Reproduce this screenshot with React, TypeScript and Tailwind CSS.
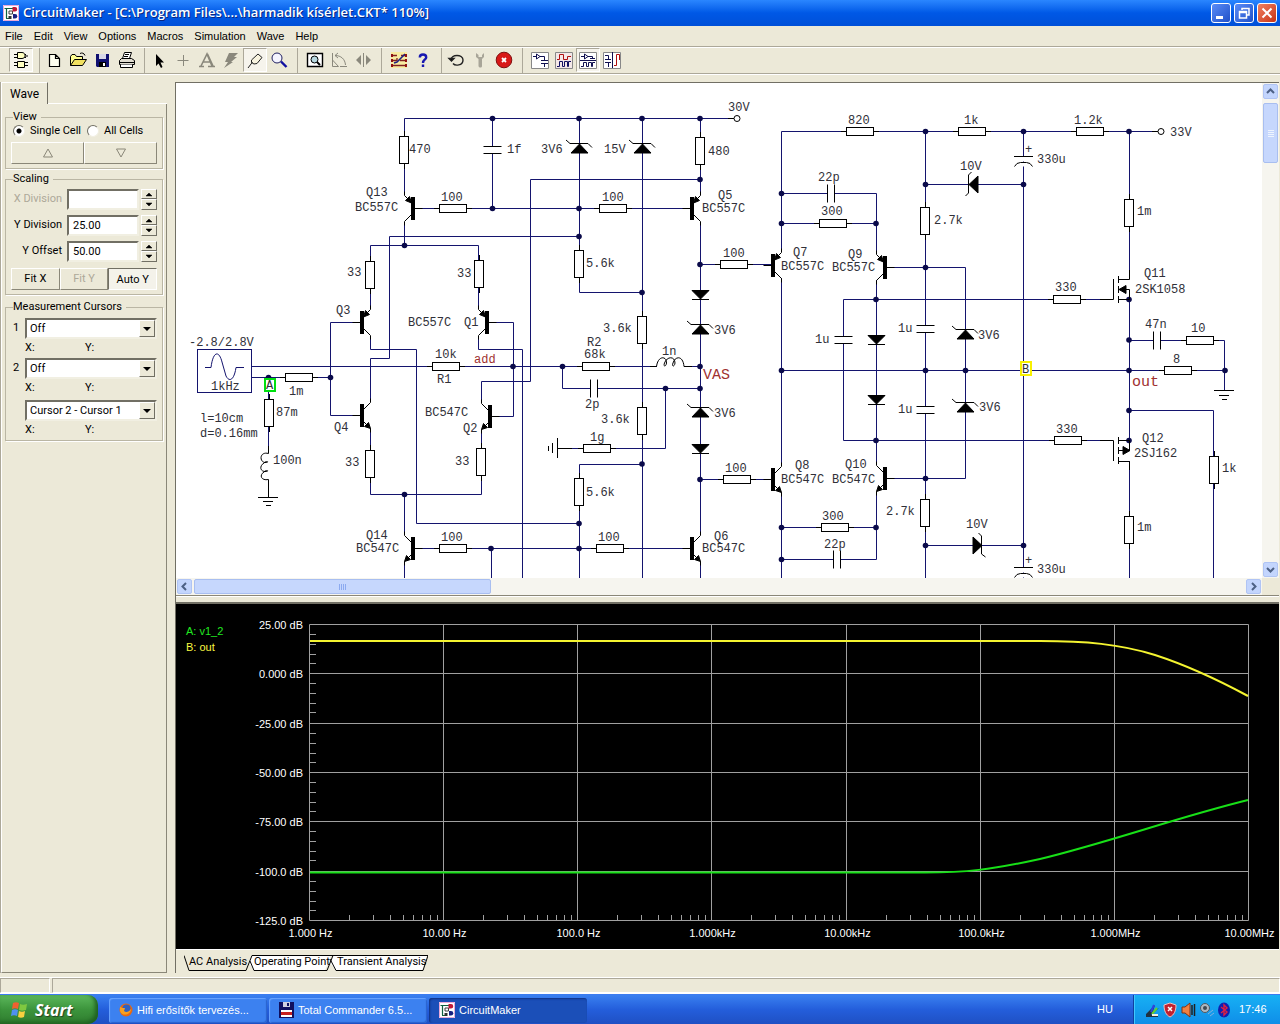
import type { ReactNode } from 'react';

const MENUS = ['File', 'Edit', 'View', 'Options', 'Macros', 'Simulation', 'Wave', 'Help'];

/* ---------- Schematic data ---------- */

const WIRES = [
  // left half
  'M404.5 137V118.5H733', 'M492.5 118V208', 'M579.5 118V250', 'M642.5 118V578', 'M700.5 118V195',
  'M404.5 163V195', 'M404.5 222V245.5', 'M415 208.5H690', 'M700.5 179.5H530.5V381.5H481.5V403',
  'M579.5 236.5H389.5V358.5H370.5V402', 'M370.5 309V245.5H478.5V309', 'M579.5 277V292.5H642.5',
  'M360 322.5H330.5V415.5H360', 'M370.5 336V349.5H416.5V523.5H579.5', 'M478.5 336V349.5H522.5V578',
  'M489 322.5H513.5V416.5H492', 'M252 366.5H657', 'M684 366.5H700', 'M252 377.5H330',
  'M370.5 429V494.5H481.5V430', 'M404.5 494.5V535', 'M404.5 562V578', 'M415 548.5H690', 'M491.5 548.5V578',
  'M562.5 366.5V388.5H700', 'M665.5 388.5V448.5H558', 'M642.5 464.5H579.5V578', 'M268.5 377V453',
  'M700.5 222V535', 'M700.5 562V578', 'M700 264.5H771', 'M700 479.5H771',
  // right half
  'M781.5 252V131.5H1157', 'M781.5 193.5H876.5V253', 'M781.5 223.5H876', 'M781.5 278V466', 'M781.5 493V578',
  'M925.5 131V578', 'M925.5 184.5H1023', 'M1023.5 131V578', 'M1129.5 131V279', 'M886 267.5H965.5V478.5H887',
  'M1113 299.5H843.5V440.5H1113', 'M876.5 280V465', 'M876.5 492V559.5H781.5', 'M781.5 527.5H876',
  'M781.5 370.5H1225', 'M925.5 545.5H1023', 'M1129.5 299V440', 'M1129.5 461V578',
  'M1129.5 340.5H1224.5V390', 'M1129.5 410.5H1213.5V578',
];

const DOTS: [number, number][] = [
  [492.5, 118.5], [579, 118.5], [642, 118.5], [700, 118.5], [700, 179.5], [492.5, 208.5], [579, 208.5],
  [579, 236.5], [404.5, 245.5], [642, 292.5], [700, 264.5], [268.5, 377.5], [330.5, 377.5], [513, 366.5],
  [562.5, 366.5], [700, 366.5], [665.5, 388.5], [700, 388.5], [642, 464], [404.5, 494.5], [579, 523.5],
  [491, 548.5], [579, 548.5], [700, 479.5], [781.5, 193.5], [781.5, 223.5], [876, 223.5], [781.5, 370.5],
  [925.5, 131.5], [1023.5, 131.5], [1129, 131.5], [925.5, 184.5], [1023.5, 184.5], [925.5, 267.5],
  [876, 299.5], [925.5, 370.5], [965.5, 370.5], [876, 440.5], [925.5, 478.5], [925.5, 545.5], [1023.5, 545.5],
  [781.5, 527.5], [876, 527.5], [781.5, 559.5], [1129, 299.5], [1129, 340], [1129, 370.5], [1225, 370.5],
  [1129, 410.5], [1129, 440.5],
];

const H_RESISTORS: [number, number][] = [
  [453, 208.5], [613, 208.5], [446, 366.5], [299, 377.5], [596, 366.5], [597, 448.5], [453, 548.5],
  [610, 548.5], [734, 264.5], [737, 479.5], [860, 131.5], [972, 131.5], [1090, 131.5], [833, 223.5],
  [835, 527.5], [1067, 299.5], [1068, 440.5], [1200, 340.5], [1178, 370.5],
];

const V_RESISTORS: [number, number][] = [
  [404, 150], [700, 151], [370, 275], [479, 274], [579, 264], [642, 330], [642, 421], [579, 492],
  [269, 413], [370, 464], [481, 462], [925, 221], [925, 513], [1129, 213], [1129, 530], [1214, 470],
];

// plates stacked along a vertical lead
const V_CAPS: [number, number][] = [[492, 150], [843, 340], [925, 329], [925, 410]];
const H_CAPS: [number, number][] = [[594, 388], [831, 193], [837, 559], [1157, 340]];

const ZENERS: [number, number][] = [[579, 143], [642, 143], [700, 324], [700, 407], [965, 329], [965, 402]];
const DIODES: [number, number][] = [[700, 290], [700, 444], [876, 335], [876, 395]];

// x of the emitter/collector lead, y of the base, side of the base, type
const TRANSISTORS: [number, number, 1 | -1, 'pnp' | 'npn'][] = [
  [404.5, 208.5, -1, 'pnp'], [700.5, 208.5, 1, 'pnp'], [370.5, 322.5, 1, 'pnp'], [478.5, 322.5, -1, 'pnp'],
  [370.5, 415.5, 1, 'npn'], [481.5, 416.5, -1, 'npn'], [404.5, 548.5, -1, 'npn'], [700.5, 548.5, 1, 'npn'],
  [781.5, 265.5, 1, 'pnp'], [876.5, 267.5, -1, 'pnp'], [781.5, 479.5, 1, 'npn'], [876.5, 478.5, -1, 'npn'],
];

const LABELS: [string, number, number][] = [
  ['470', 409, 153], ['1f', 507, 153], ['3V6', 541, 153], ['15V', 604, 153], ['480', 708, 155], ['30V', 728, 111],
  ['Q13', 366, 196], ['BC557C', 355, 211], ['100', 441, 201], ['100', 602, 201], ['Q5', 718, 199],
  ['BC557C', 702, 212], ['33', 347, 276], ['33', 457, 277], ['5.6k', 586, 267], ['Q3', 336, 314],
  ['BC557C', 408, 326], ['Q1', 464, 326], ['-2.8/2.8V', 189, 346], ['1kHz', 211, 390], ['1m', 289, 395],
  ['l=10cm', 200, 422], ['d=0.16mm', 200, 437], ['87m', 276, 416], ['100n', 273, 464], ['10k', 435, 358],
  ['R1', 437, 383], ['BC547C', 425, 416], ['Q2', 463, 432], ['Q4', 334, 431], ['33', 345, 466],
  ['33', 455, 465], ['Q14', 366, 539], ['BC547C', 356, 552], ['100', 441, 541], ['100', 598, 541],
  ['3.6k', 603, 332], ['R2', 587, 346], ['68k', 584, 358], ['1n', 662, 355], ['2p', 585, 408],
  ['3.6k', 601, 423], ['1g', 590, 441], ['5.6k', 586, 496], ['3V6', 714, 334], ['3V6', 714, 417],
  ['Q6', 714, 540], ['BC547C', 702, 552], ['100', 723, 257], ['100', 725, 472], ['Q7', 793, 256],
  ['BC557C', 781, 270], ['Q9', 848, 258], ['BC557C', 832, 271], ['22p', 818, 181], ['300', 821, 215],
  ['820', 848, 124], ['1k', 964, 124], ['1.2k', 1074, 124], ['33V', 1170, 136], ['10V', 960, 170],
  ['330u', 1037, 163], ['2.7k', 934, 224], ['1m', 1137, 215], ['Q11', 1144, 277], ['2SK1058', 1135, 293],
  ['330', 1055, 291], ['47n', 1145, 328], ['10', 1191, 332], ['8', 1173, 363], ['3V6', 978, 339],
  ['3V6', 979, 411], ['1u', 815, 343], ['1u', 898, 332], ['1u', 898, 413], ['Q8', 795, 469],
  ['BC547C', 781, 483], ['Q10', 845, 468], ['BC547C', 832, 483], ['300', 822, 520], ['22p', 824, 548],
  ['2.7k', 886, 515], ['10V', 966, 528], ['330u', 1037, 573], ['330', 1056, 433], ['Q12', 1142, 442],
  ['2SJ162', 1134, 457], ['1k', 1222, 472], ['1m', 1137, 531], ['+', 1025, 153], ['+', 1025, 564],
];

function Transistor({ x, y, side, type }: { x: number; y: number; side: 1 | -1; type: 'pnp' | 'npn' }) {
  return (
    <g transform={`translate(${x} ${y}) scale(${side} 1)`}>
      <path d="M-18 0H-10M-7 -6L0 -13V-17M-7 6L0 13V17" fill="none" stroke="#000" />
      <rect x="-10.5" y="-11.5" width="4" height="23" />
      {type === 'pnp' ? <path d="M-7 -5.5L-5 -12L-1 -8Z" stroke="#000" /> : <path d="M0 13L-6 11L-2 7Z" stroke="#000" />}
    </g>
  );
}

function Schematic() {
  return (
    <svg className="block w-[1085px] h-[495px] shrink-0" viewBox="176 83 1085 495" role="img" aria-label="Amplifier schematic">
      <g fill="none" stroke="#14146e">
        {WIRES.map(d => <path key={d} d={d} />)}
        <rect x="197.5" y="349.5" width="54" height="43" fill="#fff" />
        <path d="M205 367.5H211C213 351 219 350 222 362L226 376C229 382 234 381 236 367.5H244" />
      </g>
      <g fill="#0a0a4a">
        {DOTS.map(([x, y]) => <circle key={`${x}-${y}`} cx={x} cy={y} r="2.8" />)}
      </g>

      {/* Passive parts */}
      <g fill="#fff" stroke="#000">
        {H_RESISTORS.map(([x, y]) => (
          <g key={`${x}-${y}`}>
            <path d={`M${x - 19} ${y}H${x + 19}`} />
            <rect x={x - 13.5} y={y - 4} width="27" height="8" />
          </g>
        ))}
        {V_RESISTORS.map(([x, y]) => (
          <g key={`${x}-${y}`}>
            <path d={`M${x + 0.5} ${y - 19}V${y + 19}`} />
            <rect x={x - 4.5} y={y - 13.5} width="9" height="27" />
          </g>
        ))}
        {V_CAPS.map(([x, y]) => (
          <g key={`${x}-${y}`}>
            <rect x={x - 2} y={y - 3} width="6" height="6" stroke="none" />
            <path d={`M${x - 8.5} ${y - 3.5}h18M${x - 8.5} ${y + 3.5}h18`} />
          </g>
        ))}
        {H_CAPS.map(([x, y]) => (
          <g key={`${x}-${y}`}>
            <rect x={x - 3} y={y - 2} width="6" height="6" stroke="none" />
            <path d={`M${x - 3.5} ${y - 8.5}v18M${x + 3.5} ${y - 8.5}v18`} />
          </g>
        ))}
        {[156.5, 567.5].map(y => (
          <g key={y}>
            <rect x="1020" y={y} width="7" height="5" stroke="none" />
            <path d={`M1014 ${y}h19M1014.5 ${y + 10}q2 -4 6 -4h6q4 0 6 4`} />
          </g>
        ))}
      </g>

      {/* Diodes */}
      <g stroke="#000">
        {ZENERS.map(([x, y]) => (
          <g key={`${x}-${y}`}>
            <path d={`M${x - 13} ${y - 3}l4 3.5h18l4 4`} fill="none" />
            <path d={`M${x + 0.5} ${y + 1}l8.5 9h-17Z`} />
          </g>
        ))}
        {DIODES.map(([x, y]) => (
          <g key={`${x}-${y}`}>
            <path d={`M${x - 8} ${y + 0.5}h17l-8.5 8.5Z`} />
            <path d={`M${x - 8} ${y + 9.5}h17`} />
          </g>
        ))}
        <path d="M969 184.5L978 176V193Z" />
        <path d="M971.5 172L968.5 175V193L965.5 196" fill="none" />
        <path d="M982 545.5L973 537V554Z" />
        <path d="M978.5 533L981.5 536V554L985.5 557" fill="none" />
      </g>

      {TRANSISTORS.map(([x, y, side, type]) => (
        <Transistor key={`${x}-${y}`} x={x} y={y} side={side} type={type} />
      ))}

      {/* MOSFETs */}
      <g fill="none" stroke="#000">
        <path d="M1100 299.5H1113.5V279M1118.5 276V283M1118.5 286V293M1118.5 296V303M1118.5 279.5H1129.5V270M1118.5 289.5H1129.5V299.5H1118.5" />
        <path d="M1119 289.5L1126 285.5V293.5Z" fill="#000" />
        <path d="M1100 440.5H1113.5V461M1118.5 437V444M1118.5 447V454M1118.5 457V464M1118.5 461.5H1129.5V470M1118.5 450.5H1129.5V440.5H1118.5" />
        <path d="M1130 450.5L1123 446.5V454.5Z" fill="#000" />
      </g>

      {/* Coils, grounds and supply pins */}
      <g fill="none" stroke="#000">
        <path d="M650 366.5H656.5C658 355 667 356 666.5 363C666 367 663 367 664.5 363C667 356 675 356 675 363C674.5 367 671.5 367 673 363C675 356 683 355 684 366.5H692" />
        <path d="M268.5 446V453.5C259 451 259 463 266 462.5C270 462 266 460.5 264 463C259 466 260 472 266 471.5C270 471 266 469.5 264 472C259 475 261 481 268.500 479.500V497" />
        <path d="M258 497.5H278M263 501.5H273M266 505.5H271" />
        <path d="M1214 390.5H1234M1219 395.5H1229M1222 399.5H1227" />
        <path d="M572 448.5H557.5M557.5 438V458M552.5 443V453M548.5 446V451" />
        <path d="M728 118.5H734M1152 131.5H1158" />
        <circle cx="737" cy="118.5" r="3" fill="#fff" />
        <circle cx="1161" cy="131.5" r="3" fill="#fff" />
      </g>

      {/* Probes */}
      <rect x="265" y="379" width="10" height="12" fill="#fff" stroke="#00e010" strokeWidth="2" />
      <rect x="1021" y="362" width="10" height="13" fill="#fff" stroke="#f8f000" strokeWidth="2" />

      <g fontFamily="'Liberation Mono', monospace" fontSize="12" fill="#303038">
        {LABELS.map(([text, x, y]) => <text key={`${x}-${y}`} x={x} y={y}>{text}</text>)}
        <text x="266" y="389">A</text>
        <text x="1022" y="373">B</text>
        <g fill="#a03030">
          <text x="474" y="363">add</text>
          <text x="703" y="379" fontSize="15">VAS</text>
          <text x="1132" y="386" fontSize="15">out</text>
        </g>
      </g>
    </svg>
  );
}

/* ---------- Bode plot ---------- */

const DB_LABELS = ['25.00 dB', '0.000 dB', '-25.00 dB', '-50.00 dB', '-75.00 dB', '-100.0 dB', '-125.0 dB'];
const HZ_LABELS = ['1.000  Hz', '10.00  Hz', '100.0  Hz', '1.000kHz', '10.00kHz', '100.0kHz', '1.000MHz', '10.00MHz'];
const PLOT = { left: 309.5, right: 1248.5, top: 624.5, bottom: 920.5 };
const DECADE = (PLOT.right - PLOT.left) / 7;
const DIVISION = (PLOT.bottom - PLOT.top) / 6;

function BodePlot() {
  const decades = HZ_LABELS.map((_, i) => Math.floor(PLOT.left + i * DECADE) + 0.5);
  const divisions = DB_LABELS.map((_, i) => Math.floor(PLOT.top + i * DIVISION) + 0.5);
  const logTicks = decades.slice(0, -1).flatMap(x => [2, 3, 4, 5, 6, 7, 8, 9].map(n => Math.floor(x + Math.log10(n) * DECADE) + 0.5));
  const dbTicks = divisions.slice(0, -1).flatMap(y => [1, 2, 3, 4].map(n => Math.floor(y + (n * DIVISION) / 5) + 0.5));

  return (
    <svg className="block w-full h-auto" viewBox="176 604 1103 345" role="img" aria-label="AC analysis plot">
      <g stroke="#a0a0a0" fill="none">
        {decades.map(x => <path key={x} d={`M${x} ${PLOT.top}V${PLOT.bottom}`} />)}
        {divisions.map(y => <path key={y} d={`M${PLOT.left} ${y}H${PLOT.right}`} />)}
        {logTicks.map(x => <path key={x} d={`M${x} 915V920`} />)}
        {dbTicks.map(y => <path key={y} d={`M310 ${y}H316`} />)}
      </g>
      <path d="M310 641H1040C1085 641 1120 644 1155 655C1192 667 1222 682 1248 696" fill="none" stroke="#f4f430" strokeWidth="2" />
      <path d="M310 872.5H925C965 872.5 990 870 1040 859C1110 842 1175 818 1248 800" fill="none" stroke="#18e018" strokeWidth="2" />
      <g fontFamily="'Liberation Sans', Arial, sans-serif" fontSize="11" fill="#fff">
        <text x="186" y="635" fill="#20e820">A: v1_2</text>
        <text x="186" y="651" fill="#f8f840">B: out</text>
        {DB_LABELS.map((text, i) => <text key={text} x="303" y={divisions[i] + 4} textAnchor="end">{text}</text>)}
        {HZ_LABELS.map((text, i) => <text key={text} x={decades[i] + 1} y="937" textAnchor="middle">{text}</text>)}
      </g>
    </svg>
  );
}

/* ---------- Toolbar ---------- */

function AppIcon() {
  return (
    <svg className="w-4 h-4 shrink-0" viewBox="0 0 16 16" aria-hidden="true">
      <rect width="16" height="16" fill="#fff" />
      <path d="M.5 .5H15.5V15.5H.5Z" fill="none" stroke="#e8a8d8" />
      <path d="M1.500 3.500H10M3.500 3V13M3 13.500H6" fill="none" stroke="#106040" strokeWidth="1.200" />
      <path d="M6 6H9.500V9H6Z" fill="none" stroke="#404040" />
      <path d="M9.500 2H12A2.200 2.200 0 0 1 12 6.500H9.500Z" fill="#c01838" />
      <path d="M10 9H12A2.300 2.300 0 0 1 12 13.600H10Z" fill="#182080" />
      <path d="M5.500 11H8.500V14H5.500Z" fill="#303030" />
    </svg>
  );
}

const GRAY = '#8a887c';

const TOOL_GROUPS: { lead: string; tools: { name: string; icon: ReactNode; pressed?: boolean; disabled?: boolean }[] }[] = [
  {
    lead: 'pl-[4px]',
    tools: [
      {
        name: 'Digital mode', pressed: true, icon: (
          <g fill="#ffffc0" stroke="#000">
            <path d="M3 4.500H15M3 7.500H15M14 6H17M3 12.500H17M3 15.500H17" /><path d="M6.500 2.500H11C15 2.500 15 8.500 11 8.500H6.500Z" /><path d="M6.500 11.500H13.500V17.500H6.500Z" />
          </g>
        ),
      },
    ],
  },
  {
    lead: 'ml-[6px] border-l pl-[2px]',
    tools: [
      { name: 'New', icon: <path d="M5.500 4.500H11.500L15.500 8.500V16.500H5.500ZM11.500 4.500V8.500H15.500" fill="#fffff0" stroke="#000" strokeWidth="1.200" /> },
      {
        name: 'Open', icon: (
          <g stroke="#000"><path d="M2.500 15.500V6.500L4 4.500H7L8.500 6.500H14.500V9.500" fill="#ffff90" /><path d="M2.500 15.500L6.500 9.500H18.500L14.500 15.500Z" fill="#f0e060" /><path d="M12 3.500C14 2.500 16 3 17 5.500" fill="none" /></g>
        ),
      },
      { name: 'Save', icon: <g><path d="M4 4H17V17H5L4 16Z" fill="#101070" /><path d="M7 4H14V9H7Z" fill="#d8d8e8" /><path d="M7 12H14V17H7Z" fill="#000" /><path d="M11 13H13V16H11Z" fill="#fff" /></g> },
      {
        name: 'Print', icon: (
          <g fill="#fff" stroke="#000"><path d="M6.500 8.500L8.500 2.500H15.500L13.500 8.500ZM9 4.500H13M8 6.500H12" /><path d="M3.500 10.500L5.500 8.500H15.500L18.500 10.500V14.500H3.500Z" fill="#e0dcd0" /><path d="M4 12.500H18M4.500 14.500V17.500H16.500V14.500" /></g>
        ),
      },
    ],
  },
  {
    lead: 'ml-[6px] border-l pl-[2px]',
    tools: [
      { name: 'Arrow', icon: <path d="M7 4V16L9.500 13.500L12 18L13.500 17L11.500 12.500H15Z" fill="#000" /> },
      { name: 'Wire', disabled: true, icon: <path d="M4.500 10.500H15.500M10.500 5V16" fill="none" stroke={GRAY} /> },
      { name: 'Text', disabled: true, icon: <path d="M2 16.500H7M11 16.500H18M4 16L10 4L15 16M6.500 12H13M10.500 4L16 16" fill="none" stroke={GRAY} strokeWidth="1.600" /> },
      { name: 'Delete', disabled: true, icon: <path d="M8 3H17L13 7H16L10 12H12L3 18L7 12H4Z" fill={GRAY} /> },
      { name: 'Probe', pressed: true, icon: <path d="M3 18L7.500 12M6.500 12.500V10L13 4L17 7.500L12 13.500L9 14Z" fill="#f8f4e0" stroke="#222" /> },
      { name: 'Zoom', icon: <g><circle cx="8" cy="8" r="5" fill="#f4f4ff" stroke="#202060" /><path d="M12 11.500L17.500 17" stroke="#1010a0" strokeWidth="2.400" /></g> },
    ],
  },
  {
    lead: 'ml-[6px] border-l pl-[5px]',
    tools: [
      { name: 'Fit circuit', icon: <g fill="#fff" stroke="#000"><path d="M2.500 3.500H17.500V16.500H2.500Z" strokeWidth="1.400" /><circle cx="9.500" cy="9.500" r="3.500" fill="#b8d8e0" /><path d="M12 12L15 15" strokeWidth="2" /></g> },
      { name: 'Rotate', disabled: true, icon: <path d="M3.500 3V16.500H9.500L3.500 10M6 5.500C12 5.500 16 9 16.500 15M6 5.500L9 3M6 5.500L9 8M11 16.500H18" fill="none" stroke={GRAY} /> },
      { name: 'Mirror', disabled: true, icon: <g fill={GRAY}><path d="M8 5V15L3 10ZM13 5V15L18 10Z" /><path d="M10 3H11V17H10Z" /></g> },
    ],
  },
  {
    lead: 'ml-[6px] border-l pl-[5px]',
    tools: [
      {
        name: 'Check wires', icon: (
          <g fill="none">
            <path d="M2 2H18V18H2Z" fill="#f8eca0" />
            <path d="M3 5.500H8M3 10.500H8V8M3 15.500H17M12 5.500H17M11 10.500H17" stroke="#802020" strokeWidth="1.300" />
            <path d="M5 13L8 12L16 4" stroke="#202080" strokeWidth="1.500" />
            <path d="M3 4V7M3 9V12M3 14V17M17 4V7M17 9V12M17 14V17" stroke="#901010" strokeWidth="2" />
          </g>
        ),
      },
      { name: 'Help', icon: <path d="M6.800 7.500C6.800 3.500 13.200 3.500 13.200 7.500C13.200 9.500 10 9.500 10 13M10 14.500V17" fill="none" stroke="#1818b0" strokeWidth="2.400" /> },
    ],
  },
  {
    lead: 'ml-[6px] border-l pl-[2px]',
    tools: [
      { name: 'Reset', icon: <g fill="none" stroke="#222" strokeWidth="1.400"><path d="M5 10C5 4 17 4 17 10C17 16 9 16 7 13.500" /><path d="M3 8.500L5.500 11L8 8.500Z" fill="#000" /></g> },
      { name: 'Setup', disabled: true, icon: <path d="M6 3V7L8.500 9V16C9 18 12 18 12 16V9L14 7V3L12 5V7H8.500V5Z" fill="#a8a598" /> },
      { name: 'Stop', icon: <g><circle cx="10" cy="10" r="7.800" fill="#d81818" stroke="#801010" /><path d="M8 8L12 12M12 8L8 12" stroke="#fff" strokeWidth="1.800" /></g> },
    ],
  },
  {
    lead: 'ml-[6px] border-l pl-[5px]',
    tools: [
      { name: 'Schematic window', icon: <g fill="none" stroke="#101050"><path d="M1.500 2.500H18.500V18.500H1.500Z" fill="#fff" stroke="#888" /><path d="M3 6.500H6M6.500 4V9L10 6.500ZM10 6.500H14.500V10M11 10.500H18M11 13.500H18M14.500 13V17" /></g> },
      { name: 'Waveform window', icon: <g fill="none" stroke="#101060"><path d="M1.500 2.500H18.500V18.500H1.500Z" fill="#f4e8e8" stroke="#888" /><path d="M3 9.500H5.500V4.500H9.500V9.500H13.500V6.500H17" stroke="#b01010" /><path d="M3 16.500H5.500V11.500H8.500V16.500H10.500V11.500H13.500V16.500H14.500V11.500H17" /></g> },
      { name: 'Split horizontally', pressed: true, icon: <g fill="none" stroke="#101050"><path d="M1.500 2.500H18.500V18.500H1.500Z" fill="#fff" stroke="#888" /><path d="M2 10.500H18M3 6.500H6M6.500 4V9L10 6.500ZM10 6.500H14.500V9M12 8.500H17" /><path d="M3 16.500H5.500V12.500H8.500V16.500H10.500V12.500H13.500V16.500H14.500V12.500H17" /></g> },
      { name: 'Split vertically', icon: <g fill="none" stroke="#101050"><path d="M1.500 2.500H18.500V18.500H1.500Z" fill="#fff" stroke="#888" /><path d="M10.500 2V18M3 5.500H6.500V9M3 9.500H9M3 12.500H9M6.500 12V17" /><path d="M12 15.500H14.500V4.500H17.500V10" stroke="#b01010" /></g> },
    ],
  },
];

function Toolbar() {
  return (
    <div className="flex items-center h-[27px] pl-[5px] border-b border-[#aca899] shadow-[0_1px_0_#fff]">
      {TOOL_GROUPS.map((group, i) => (
        <div key={i} className={`flex items-center h-[25px] border-[#aca899] ${group.lead}`}>
          {group.tools.map(tool => (
            <button
              key={tool.name}
              title={tool.name}
              disabled={tool.disabled}
              className={`flex items-center justify-center w-6 h-6 ${tool.pressed ? 'bg-[#f6f4ec] border border-t-[#aca899] border-l-[#aca899] border-b-white border-r-white' : ''}`}
            >
              <svg className="w-5 h-5 shrink-0" viewBox="0 0 20 20">{tool.icon}</svg>
            </button>
          ))}
        </div>
      ))}
    </div>
  );
}

/* ---------- Side panel ---------- */

function Group({ title, className, children }: { title: string; className: string; children: ReactNode }) {
  return (
    <fieldset className={`border border-[#bab6a4] px-[5px] min-w-0 shadow-[1px_1px_0_#fff] ${className}`}>
      <legend className="ml-[2px] leading-[14px] pr-1">{title}</legend>
      {children}
    </fieldset>
  );
}

function FlatButton({ children, disabled, pressed, label }: { children: ReactNode; disabled?: boolean; pressed?: boolean; label?: string }) {
  return (
    <button
      disabled={disabled}
      aria-label={label}
      className={`flex flex-1 items-center justify-center h-[22px] border ${disabled ? 'text-[#aca899]' : 'text-black'} ${
        pressed ? 'bg-[#f4f2ea] border-t-[#716f64] border-l-[#716f64] border-b-white border-r-white pt-[2px]' : 'border-t-white border-l-white border-b-[#8a8778] border-r-[#8a8778]'
      }`}
    >
      {children}
    </button>
  );
}

function NumberRow({ id, label, value, disabled }: { id: string; label: string; value: string; disabled?: boolean }) {
  return (
    <div className="flex items-center h-[26px]">
      <label htmlFor={id} className={`flex-1 text-right pr-[5px] ${disabled ? 'text-[#aca899]' : ''}`}>{label}</label>
      <input
        id={id}
        defaultValue={value}
        disabled={disabled}
        className="w-[72px] h-[21px] px-1 bg-white border-2 border-t-[#716f64] border-l-[#716f64] border-b-[#f1efe2] border-r-[#f1efe2]"
      />
      <div className="flex flex-col w-[16px] h-[21px] ml-[2px]">
        {['M4 6L7 3L10 6Z', 'M4 3L7 6L10 3Z'].map((d, i) => (
          <button key={d} aria-label={`${label} ${i === 0 ? 'up' : 'down'}`} className="flex-1 border border-t-white border-l-white border-b-[#716f64] border-r-[#716f64]">
            <svg className="w-[14px] h-[8px]" viewBox="0 0 14 8"><path d={d} stroke="#000" strokeWidth=".5" /></svg>
          </button>
        ))}
      </div>
    </div>
  );
}

function CursorRow({ number, value }: { number?: string; value: string }) {
  const id = `cursor-${number ?? 'difference'}`;
  return (
    <div>
      <div className="flex items-center">
        <label htmlFor={id} className="w-[14px] pl-[2px] shrink-0">{number}</label>
        <div className="flex flex-1 h-[21px] bg-white border-2 border-t-[#716f64] border-l-[#716f64] border-b-[#f1efe2] border-r-[#f1efe2]">
          <select id={id} aria-label={number ? undefined : 'Cursor difference'} className="appearance-none flex-1 min-w-0 bg-white pl-[3px] leading-[16px]">
            <option>{value}</option>
          </select>
          <span className="flex items-center justify-center w-[16px] shrink-0 bg-[#ece9d8] border border-t-white border-l-white border-b-[#716f64] border-r-[#716f64]">
            <svg className="w-[8px] h-[4px]" viewBox="0 0 8 4"><path d="M0 0H8L4 4Z" /></svg>
          </span>
        </div>
      </div>
      <div className="flex h-[19px] items-center pl-[14px]">
        <span className="w-[60px]">X:</span>
        <span>Y:</span>
      </div>
    </div>
  );
}

const RADIO_CLASS = 'appearance-none w-[12px] h-[12px] shrink-0 rounded-full border border-t-[#716f64] border-l-[#716f64] border-b-[#f1efe2] border-r-[#f1efe2] bg-white checked:bg-[radial-gradient(#000_2px,#fff_3px)]';

function WavePanel() {
  return (
    <aside className="flex flex-col w-[167px] shrink-0 border-l border-[#aca899] font-[Roboto,sans-serif]">
      <div className="flex">
        <button className="w-[47px] h-[22px] border-l border-t border-white border-r border-r-[#716f64] text-[12px]">Wave</button>
        <div className="flex-1 border-b border-white" />
      </div>
      <div className="flex-1 border-l border-white border-r border-r-[#8a8778] border-b border-b-[#8a8778] px-[3px] pt-[6px]">
        <Group title="View" className="h-[59px]">
          <div className="flex items-center gap-[5px] h-[14px] pl-[2px]">
            <input id="single" type="radio" name="cells" defaultChecked className={RADIO_CLASS} />
            <label htmlFor="single" className="w-[52px] whitespace-nowrap">Single Cell</label>
            <input id="all" type="radio" name="cells" className={RADIO_CLASS} />
            <label htmlFor="all" className="whitespace-nowrap">All Cells</label>
          </div>
          <div className="flex mt-1">
            <FlatButton label="Previous cell"><svg className="w-[12px] h-[10px]" viewBox="0 0 12 10"><path d="M1.500 9L6 1L10.500 9Z" fill="none" stroke="#8a8778" /></svg></FlatButton>
            <FlatButton label="Next cell"><svg className="w-[12px] h-[10px]" viewBox="0 0 12 10"><path d="M1.500 1L6 9L10.500 1Z" fill="none" stroke="#8a8778" /></svg></FlatButton>
          </div>
        </Group>
        <Group title="Scaling" className="h-[123px] mt-[3px]">
          <NumberRow id="x-div" label="X Division" value="" disabled />
          <NumberRow id="y-div" label="Y Division" value="25.00" />
          <NumberRow id="y-off" label="Y Offset" value="50.00" />
          <div className="flex mt-[4px]">
            <FlatButton>Fit X</FlatButton>
            <FlatButton disabled>Fit Y</FlatButton>
            <FlatButton pressed>Auto Y</FlatButton>
          </div>
        </Group>
        <Group title="Measurement Cursors" className="h-[141px] mt-[5px]">
          <div className="pt-[4px]">
            <CursorRow number="1" value="Off" />
            <CursorRow number="2" value="Off" />
          </div>
          <div className="pt-[2px]">
            <CursorRow value="Cursor 2 - Cursor 1" />
          </div>
        </Group>
      </div>
    </aside>
  );
}

/* ---------- Scroll bars ---------- */

function ScrollButton({ label, d }: { label: string; d: string }) {
  return (
    <button aria-label={label} className="flex items-center justify-center w-[15px] h-[15px] m-[1px] shrink-0 rounded-[2px] border border-[#b0c4f4] bg-[#c3d5fd]">
      <svg className="w-[9px] h-[9px]" viewBox="0 0 9 9"><path d={d} fill="none" stroke="#4d6185" strokeWidth="2" /></svg>
    </button>
  );
}

function SchematicPane() {
  return (
    <div className="border-b border-[#8a8778]">
      <div className="flex">
        <div className="flex flex-1 min-w-0 overflow-hidden bg-white">
          <Schematic />
        </div>
        <div className="flex flex-col w-[17px] shrink-0 bg-[#f6f5ef]">
          <ScrollButton label="Scroll up" d="M1 6L4.500 2.500L8 6" />
          <div className="flex flex-col items-center justify-center gap-px h-[60px] mx-[1px] mt-[3px] rounded-[2px] border border-[#a8bef0] bg-[#c6d7fd]">
            {[0, 1, 2, 3].map(i => <i key={i} className="w-[6px] h-px bg-[#eef4fe]" />)}
          </div>
          <div className="flex-1" />
          <ScrollButton label="Scroll down" d="M1 3L4.500 6.500L8 3" />
        </div>
      </div>
      <div className="flex h-[17px]">
        <div className="flex flex-1 bg-[#f6f5ef]">
          <ScrollButton label="Scroll left" d="M6 1L2.500 4.500L6 8" />
          <div className="flex items-center justify-center gap-px w-[297px] h-[15px] my-[1px] ml-[1px] rounded-[2px] border border-[#a8bef0] bg-[#c6d7fd]">
            {[0, 1, 2, 3].map(i => <i key={i} className="w-px h-[6px] bg-[#8caaf0]" />)}
          </div>
          <div className="flex-1" />
          <ScrollButton label="Scroll right" d="M3 1L6.500 4.500L3 8" />
        </div>
        <div className="w-[17px]" />
      </div>
    </div>
  );
}

function AnalysisTabs() {
  return (
    <div className="grid justify-items-start content-start h-[23px] pt-[5px] pl-[8px] border-t border-white font-[Roboto,sans-serif]">
      {/* Tab outlines sit in the same grid cell as the labels */}
      <svg className="col-start-1 row-start-1 w-[244px] h-[16px]" viewBox="0 0 244 16" aria-hidden="true">
        <path d="M68 .5H147L141 15.500H70L65 8ZM149 .5H243L238 15.500H152L146 8Z" fill="#fff" />
        <path d="M0 .5L5 15.500H62L68 .5H244L239 15.500H152L146 4M149 .5L143 15.500H70L66 6" fill="none" stroke="#000" />
      </svg>
      <div className="col-start-1 row-start-1 flex items-center h-[15px] pl-[5px] gap-[8px]">
        <button className="w-[57px] text-left whitespace-nowrap">AC Analysis</button>
        <button className="w-[75px] text-left whitespace-nowrap">Operating Point</button>
        <button className="whitespace-nowrap">Transient Analysis</button>
      </div>
    </div>
  );
}

/* ---------- Taskbar ---------- */

function TaskButton({ icon, title, active }: { icon: ReactNode; title: string; active?: boolean }) {
  return (
    <button
      className={`flex items-center gap-[4px] w-[158px] h-[25px] pl-[10px] rounded-[3px] text-white text-[11px] whitespace-nowrap ${
        active ? 'bg-[#1b4fb8] shadow-[inset_1px_1px_2px_#103080]' : 'bg-[#3c81f0] shadow-[inset_1px_1px_1px_#6aa4ff,inset_-1px_-1px_1px_#2a62cc]'
      }`}
    >
      {icon}
      {title}
    </button>
  );
}

function Taskbar() {
  return (
    <footer className="flex h-[30px] bg-linear-to-b from-[#3a80f0] via-[#245edb] to-[#1f50c4] text-white text-[11px] border-t border-[#3c7cf0]">
      <button className="flex items-center w-[98px] pl-[10px] gap-[7px] rounded-r-[10px] bg-linear-to-b from-[#5cb85c] via-[#3c943c] to-[#2f7d2f] shadow-[inset_-3px_-2px_4px_#1f6020]">
        <svg className="w-[18px] h-[18px]" viewBox="0 0 18 18" aria-hidden="true">
          <path d="M3 2C5 1 7 1 9 2L8 8C6 7 4 7 2 8Z" fill="#f06030" />
          <path d="M10 3C12 4 14 4 17 3L16 9C13 10 11 10 9 9Z" fill="#80c840" />
          <path d="M2 9C4 8 6 8 8 9L7 15C5 14 3 14 1 15Z" fill="#5090f0" />
          <path d="M9 10C11 11 13 11 15 10L14 16C12 17 10 17 8 16Z" fill="#f8d040" />
        </svg>
        <span className="font-['Open_Sans',sans-serif] font-bold italic text-[16px] [text-shadow:1px_1px_1px_#204020]">Start</span>
      </button>
      <div className="flex flex-1 items-center gap-[2px] pl-[11px] pt-px">
        <TaskButton
          title="Hifi erősítők tervezés..."
          icon={
            <svg className="w-[14px] h-[14px]" viewBox="0 0 14 14" aria-hidden="true">
              <circle cx="7" cy="7" r="6.500" fill="#e86810" />
              <circle cx="7.500" cy="5.500" r="4" fill="#3060c0" />
              <path d="M1 4C3 5 4 5 6 5L5 8C7 10 10 9 12 6C12 12 3 14 1 8Z" fill="#f8a020" />
            </svg>
          }
        />
        <TaskButton
          title="Total Commander 6.5..."
          icon={
            <svg className="w-[15px] h-[16px]" viewBox="0 0 15 16" aria-hidden="true">
              <path d="M0 0H15V16H0Z" fill="#101060" /><path d="M4 0H11V5H4Z" fill="#d0d0e0" /><path d="M8 1H10V4H8Z" fill="#101060" />
              <path d="M2 8H13V15H2Z" fill="#fff" /><path d="M2 10H13V13H2Z" fill="#c82020" />
            </svg>
          }
        />
        <TaskButton active title="CircuitMaker" icon={<AppIcon />} />
      </div>
      <span className="self-center mr-[20px]">HU</span>
      <div className="flex items-center w-[147px] pl-[11px] bg-linear-to-b from-[#18b0f4] to-[#108ee8] border-l border-[#1040a0] shadow-[inset_1px_0_0_#40c8ff]">
        <svg className="w-[94px] h-[16px]" viewBox="0 0 94 16" aria-hidden="true">
          <path d="M1 12L10 3L8 9L14 6L6 13H13V15H1Z" fill="#203040" /><path d="M9 3L6 10" stroke="#3040e0" strokeWidth="2" /><path d="M12 6L7 12" stroke="#60d030" strokeWidth="2" /><path d="M7 13H13" stroke="#f0f0e0" strokeWidth="2" />
          <path d="M19 3L25 1L31 3C31 9 29 13 25 15C21 13 19 9 19 3Z" fill="#c02030" stroke="#f0c0c0" /><path d="M23 5L27 9M27 5L23 9" stroke="#fff" strokeWidth="1.500" />
          <path d="M37 5H40L45 1V15L40 11H37Z" fill="#f08040" stroke="#803010" /><path d="M47 3V13M49.500 2V14" stroke="#202020" strokeWidth="1.500" />
          <circle cx="60" cy="6" r="4.500" fill="#b0b8c0" stroke="#505860" /><circle cx="60" cy="6" r="2" fill="#404850" /><path d="M63 12L68 8M65 14L69 11" stroke="#80b0e0" />
          <ellipse cx="79" cy="8" rx="6" ry="7.500" fill="#1020b0" /><path d="M76 5L82 10L79 13V3L82 6L76 11" fill="none" stroke="#e02040" strokeWidth="1.400" />
        </svg>
        <time>17:46</time>
      </div>
    </footer>
  );
}

function TitleBar() {
  return (
    <header className="flex items-center h-[26px] px-[3px] bg-linear-to-b from-[#2a86ff] via-[#0058e6] to-[#0050d8]">
      <AppIcon />
      <h1 className="flex-1 pl-[4px] text-white font-semibold text-[13px] font-['Open_Sans',sans-serif] [text-shadow:1px_1px_0_#0a2880] whitespace-nowrap">
        CircuitMaker - [C:\Program Files\...\harmadik kísérlet.CKT* 110%]
      </h1>
      <div className="flex gap-[3px]">
        <button aria-label="Minimize" className="w-5 h-5 rounded-[3px] border border-white bg-linear-to-br from-[#5a8cf8] to-[#2050c8]">
          <svg viewBox="0 0 18 18"><path d="M4 12H11V15H4Z" fill="#fff" /></svg>
        </button>
        <button aria-label="Restore" className="w-5 h-5 rounded-[3px] border border-white bg-linear-to-br from-[#5a8cf8] to-[#2050c8]">
          <svg viewBox="0 0 18 18"><path d="M7 6V4.500H14V11H12M4.500 7.500H11.500V14H4.500ZM4 8.500H12" fill="none" stroke="#fff" strokeWidth="1.500" /></svg>
        </button>
        <button aria-label="Close" className="w-5 h-5 rounded-[3px] border border-white bg-linear-to-br from-[#f08060] to-[#c83010]">
          <svg viewBox="0 0 18 18"><path d="M4.500 4.500L13.500 13.500M13.500 4.500L4.500 13.500" stroke="#fff" strokeWidth="2" /></svg>
        </button>
      </div>
    </header>
  );
}

export default function App() {
  return (
    <div className="flex flex-col min-h-screen bg-[#ece9d8] text-black text-[11px] font-['Liberation_Sans',Arial,sans-serif]">
      <TitleBar />
      <nav className="flex items-center h-[21px] pl-[5px] gap-[11px] border-b border-[#aca899] shadow-[0_1px_0_#fff]">
        {MENUS.map(menu => <button key={menu}>{menu}</button>)}
      </nav>
      <Toolbar />

      <main className="flex flex-1 pt-[8px] pb-[4px] pr-px">
        <WavePanel />
        <section className="flex flex-col flex-1 min-w-0 ml-[8px] border-l border-t border-[#716f64]">
          <SchematicPane />
          <div className="h-[6px] border-t border-white" />
          <div className="border-t-2 border-[#716f64] bg-black">
            <BodePlot />
          </div>
          <AnalysisTabs />
        </section>
      </main>

      {/* Status bar */}
      <div className="flex h-[17px] gap-[2px] border-t border-white border-b">
        <div className="w-[50px] border border-[#aca899] border-r-white border-b-white" />
        <div className="flex-1 border border-[#aca899] border-r-white border-b-white" />
      </div>
      <Taskbar />
    </div>
  );
}
